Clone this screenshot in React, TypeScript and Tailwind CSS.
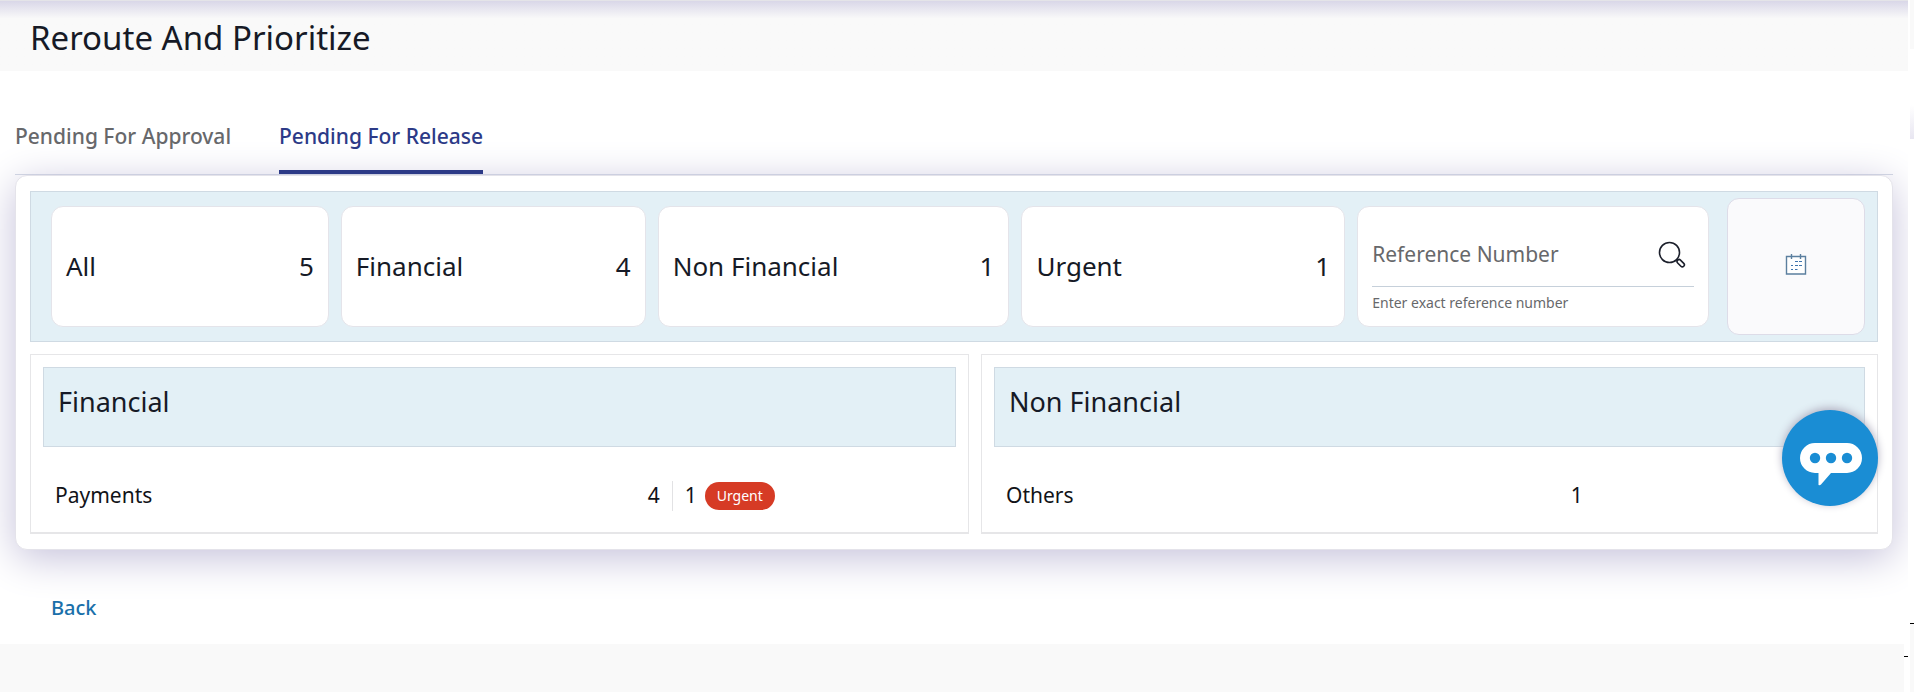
import { useState } from "react";

interface Summary {
  label: string;
  count: number;
}

interface CategoryPanelProps {
  title: string;
  item: string;
  count: number;
  urgent?: number;
}

const summaries: Summary[] = [
  { label: "All", count: 5 },
  { label: "Financial", count: 4 },
  { label: "Non Financial", count: 1 },
  { label: "Urgent", count: 1 },
];

const tabs = ["Pending For Approval", "Pending For Release"];

function SearchIcon() {
  return (
    <svg width="28" height="28" viewBox="0 0 28 28" fill="none" stroke="#1b1f2b" strokeWidth="1.6" aria-hidden="true">
      <circle cx="11.5" cy="11.5" r="10" />
      <path d="M18.6 18.6l1.2 1.2" />
      <rect x="18.4" y="20.2" width="8.6" height="4" rx="2" transform="rotate(45 22.7 22.2)" />
    </svg>
  );
}

function CalendarIcon() {
  return (
    <svg width="22" height="22" viewBox="0 0 22 22" fill="none" aria-hidden="true">
      <rect x="1" y="2.5" width="20" height="17" fill="#fff" />
      <path d="M1.5 20V2.5H20.5V20z" stroke="#5b7f9f" strokeWidth="1.4" />
      <path d="M6.5 0v5M15.5 0v5" stroke="#5b7f9f" strokeWidth="1.4" />
      <path d="M10 7.5h3M14 7.5h3M6 11.5h2M10 11.5h3M14 11.5h3M6 15.5h2M10 15.5h2.5" stroke="#3f74ad" strokeWidth="1.2" />
    </svg>
  );
}

function ChatIcon() {
  return (
    <svg width="62" height="43" viewBox="0 0 62 43" aria-hidden="true">
      <path d="M15 0h32a15 15 0 0 1 0 30H31L21 41.5q-1 1-2.5 .5V30H15A15 15 0 0 1 15 0z" fill="#fff" />
      <circle cx="15" cy="15" r="5.2" fill="#1a8dd4" />
      <circle cx="31" cy="15" r="5.2" fill="#1a8dd4" />
      <circle cx="47" cy="15" r="5.2" fill="#1a8dd4" />
    </svg>
  );
}

function CategoryPanel({ title, item, count, urgent }: CategoryPanelProps) {
  return (
    <section className="border border-b-2 border-[#e6e6e8] px-3 pt-3 pb-5">
      <h2 className="h-20 border border-[#cfdae3] bg-[#e3f0f6] px-3.5 pt-4 text-[27px] leading-9">{title}</h2>
      <div className="mt-[33px] flex h-8 items-center px-3 text-[21px] text-[#111318]">
        <span className="w-2/3">{item}</span>
        <div className="flex flex-1 items-center">
          <span>{count}</span>
          {urgent ? (
            <>
              <span className="mx-3 h-[30px] w-px bg-[#e2e2e4]" />
              <span>{urgent}</span>
              <span className="ml-2 flex h-7 items-center rounded-full bg-[#d63b25] px-3 text-sm text-white">
                Urgent
              </span>
            </>
          ) : null}
        </div>
      </div>
    </section>
  );
}

export default function App() {
  const [activeTab, setActiveTab] = useState("Pending For Release");
  const [reference, setReference] = useState("");

  return (
    <div className="flex min-h-screen gap-0.5 bg-white font-['Noto_Sans',sans-serif] text-[#161a26]">
      <div className="flex min-w-0 flex-1 flex-col overflow-hidden">
        <header className="h-[71px] border-t border-[#e4e4e8] bg-linear-to-b from-[#d9d7e8] to-[#f9f9f9] to-25% px-[30px] pt-3">
          <h1 className="text-[33px] leading-[50px]">Reroute And Prioritize</h1>
        </header>

        <main className="flex-1 px-[15px]">
          <div className="flex h-[104px] items-end gap-12 border-b border-[#d0d6e2]" role="tablist">
            {tabs.map((tab) => (
              <button
                key={tab}
                type="button"
                role="tab"
                aria-selected={tab === activeTab}
                onClick={() => setActiveTab(tab)}
                className={`relative z-10 h-[53px] border-b-4 pb-5 text-[21px] leading-7 font-medium ${
                  tab === activeTab ? "border-[#2c3a87] text-[#2c3a87]" : "border-transparent text-[#67686b]"
                }`}
              >
                {tab}
              </button>
            ))}
          </div>

          <div className="rounded-xl border border-[#e4e3ea] bg-white px-3.5 pt-[15px] pb-[15px] shadow-[0_8px_40px_#c4c0da]">
            <div className="flex items-center gap-[18px] border border-[#cfdae3] bg-[#e3f0f6] py-1.5 pr-3 pl-5">
              <div className="grid h-[121px] flex-1 grid-cols-[278fr_305fr_352fr_324fr_352fr] gap-3">
                {summaries.map((summary) => (
                  <button
                    key={summary.label}
                    type="button"
                    className="flex items-center justify-between rounded-xl border border-[#e4e4ea] bg-white px-3.5 text-[26px]"
                  >
                    <span>{summary.label}</span>
                    <span>{summary.count}</span>
                  </button>
                ))}
                <div className="min-w-0 rounded-xl border border-[#e4e4ea] bg-white px-3.5 pt-4 text-[#67686b]">
                  <div className="flex h-16 items-center border-b border-[#c6d0da]">
                    <input
                      id="reference-number"
                      aria-label="Reference Number"
                      aria-describedby="reference-hint"
                      placeholder="Reference Number"
                      value={reference}
                      onChange={(event) => setReference(event.target.value)}
                      className="min-w-0 flex-1 text-[21px] outline-none placeholder:text-[#67686b]"
                    />
                    <button type="button" aria-label="Search" className="mr-2">
                      <SearchIcon />
                    </button>
                  </div>
                  <p id="reference-hint" className="mt-1 text-sm leading-6">
                    Enter exact reference number
                  </p>
                </div>
              </div>
              <button
                type="button"
                aria-label="Filter by date"
                className="flex h-[137px] w-[138px] items-center justify-center rounded-xl border border-[#dddce8] bg-[#fafafc] pb-1"
              >
                <CalendarIcon />
              </button>
            </div>

            <div className="mt-3 grid grid-cols-[939fr_897fr] gap-3">
              <CategoryPanel title="Financial" item="Payments" count={4} urgent={1} />
              <CategoryPanel title="Non Financial" item="Others" count={1} />
            </div>
          </div>

          <a href="#" className="mt-11 ml-9 inline-block text-xl leading-7 font-medium text-[#1a70aa]">
            Back
          </a>
        </main>

        <div className="flex h-12">
          <footer className="flex-1 bg-[#f9f9f9]" />
          <span className="mt-3 w-1 border-t border-black" />
        </div>
      </div>

      <div className="flex w-1 flex-col">
        <span className="h-[49px] bg-[#f9f9f9]" />
        <span className="mt-14 h-[34px] bg-linear-to-b from-white to-[#e8e6f1]" />
        <span className="mt-auto h-[69px] border-t border-black bg-[#f9f9f9]" />
      </div>

      <button
        type="button"
        aria-label="Open chat"
        className="fixed right-9 bottom-[186px] z-20 flex size-24 items-center justify-center rounded-full bg-[#1a8dd4] pt-3 pl-0.5 shadow-[0_-2px_8px_#b0aebf]"
      >
        <ChatIcon />
      </button>
    </div>
  );
}
